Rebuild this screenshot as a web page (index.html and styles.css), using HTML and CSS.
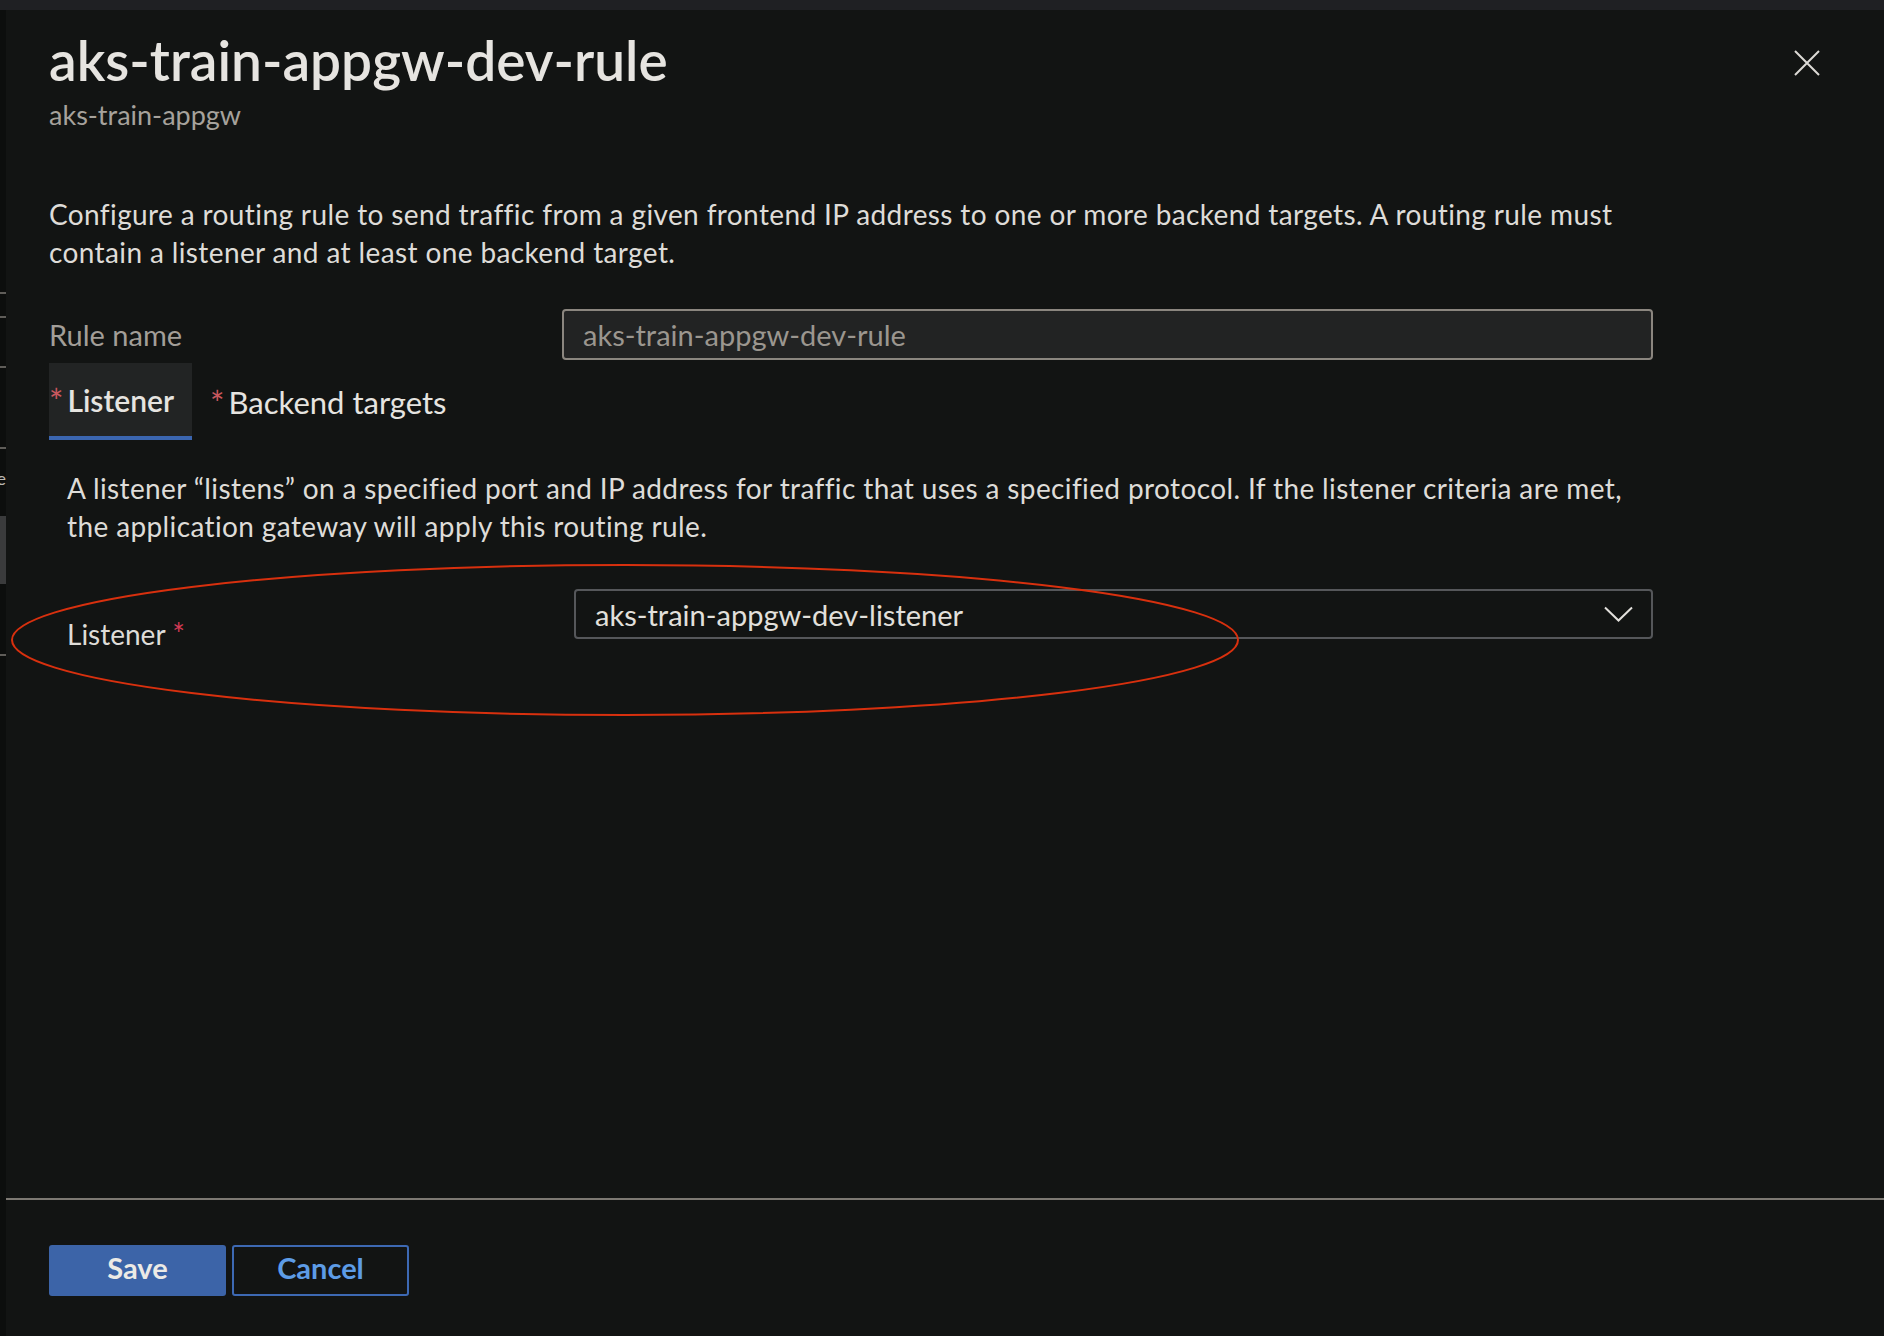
FILE: index.html
```html
<!DOCTYPE html>
<html lang="en">
<head>
<meta charset="utf-8">
<title>aks-train-appgw-dev-rule</title>
<link rel="stylesheet" href="styles.css">
</head>
<body>
<div class="topbar"></div>
<div class="main">
  <div class="edge">
    <div class="edge-mark m1"></div>
    <div class="edge-mark m2"></div>
    <div class="edge-mark m3"></div>
    <div class="edge-mark m4"></div>
    <div class="edge-glyph">e</div>
    <div class="edge-block"></div>
    <div class="edge-mark m7"></div>
  </div>
  <div class="blade">
    <div class="content">
      <div class="header">
        <div class="titles">
          <h1 class="title">aks-train-appgw-dev-rule</h1>
          <div class="subtitle">aks-train-appgw</div>
        </div>
        <button class="close" aria-label="Close">
          <svg width="26" height="26" viewBox="0 0 26 26"><path d="M1 1 L25 25 M25 1 L1 25" stroke="#dcdad6" stroke-width="2" fill="none"/></svg>
        </button>
      </div>
      <p class="desc">Configure a routing rule to send traffic from a given frontend IP address to one or more backend targets. A routing rule must contain a listener and at least one backend target.</p>
      <div class="row">
        <div class="label muted">Rule name</div>
        <div class="input">aks-train-appgw-dev-rule</div>
      </div>
      <div class="tabs">
        <div class="tab active"><span class="req">*</span>Listener</div>
        <div class="tab"><span class="req">*</span>Backend targets</div>
      </div>
      <div class="panel">
        <p class="panel-desc">A listener “listens” on a specified port and IP address for traffic that uses a specified protocol. If the listener criteria are met, the application gateway will apply this routing rule.</p>
        <div class="lrow">
          <div class="llabel">Listener <span class="req2">*</span></div>
          <div class="select">
            <span>aks-train-appgw-dev-listener</span>
            <svg width="29" height="16" viewBox="0 0 29 16"><path d="M1 1.5 L14.5 14.5 L28 1.5" stroke="#e2e0dc" stroke-width="2" fill="none"/></svg>
          </div>
        </div>
      </div>
    </div>
    <div class="footer">
      <button class="btn btn-primary">Save</button>
      <button class="btn btn-secondary">Cancel</button>
    </div>
  </div>
</div>
<svg class="annotation" width="1232" height="156" viewBox="0 0 1232 156"><ellipse cx="616" cy="78" rx="613" ry="75" fill="none" stroke="#d8300e" stroke-width="2"/></svg>
</body>
</html>
```
FILE: styles.css
```css
* { box-sizing: border-box; }
html, body { margin: 0; padding: 0; }
body {
  width: 1884px;
  height: 1336px;
  overflow: hidden;
  position: relative;
  background: #121413;
  font-family: "Segoe UI", Lato, "Liberation Sans", sans-serif;
  color: #dedcd8;
}
.topbar { height: 10px; background: #1f2023; }
.main { display: flex; height: 1326px; }
.edge {
  width: 6px;
  background: #0c0e0d;
  display: flex;
  flex-direction: column;
}
.edge-mark { height: 2px; background: #5f5d59; flex: none; }
.m1 { margin-top: 282px; }
.m2 { margin-top: 22px; }
.m3 { margin-top: 48px; }
.m4 { margin-top: 79px; }
.edge-glyph {
  margin-top: 21px;
  height: 16px;
  font-size: 18px;
  line-height: 16px;
  color: #b8b6b2;
  overflow: hidden;
  display: flex;
  justify-content: flex-end;
}
.edge-block { margin-top: 30px; height: 68px; background: #3a3b3c; }
.m7 { margin-top: 70px; }

.blade {
  flex: 1;
  display: flex;
  flex-direction: column;
  background: #121413;
}
.content { flex: 1; padding: 20px 0 0 43px; }
.header { display: flex; justify-content: space-between; align-items: flex-start; }
.title {
  margin: 0;
  font-size: 55px;
  line-height: 60px;
  font-weight: 600;
  color: #e6e4e0;
}
.subtitle {
  margin-top: 8px;
  font-size: 27px;
  line-height: 34px;
  color: #a6a29c;
}
.close {
  margin: 20px 64px 0 0;
  width: 26px;
  height: 26px;
  padding: 0;
  border: none;
  background: none;
  display: flex;
}
.desc, .panel-desc {
  font-size: 28px;
  line-height: 38px;
  letter-spacing: 0.38px;
}
.desc { width: 1604px; margin: 63px 0 0; }
.row {
  display: flex;
  align-items: center;
  width: 1604px;
  margin-top: 38px;
}
.label { width: 513px; font-size: 29px; line-height: 38px; }
.muted { color: #a29e98; }
.input {
  flex: 1;
  height: 51px;
  background: #222323;
  border: 2px solid #8b867f;
  border-radius: 4px;
  padding-left: 19px;
  display: flex;
  align-items: center;
  font-size: 29px;
  color: #9b968f;
}
.tabs { display: flex; margin-top: 3px; height: 77px; }
.tab {
  display: flex;
  align-items: center;
  padding: 0 18px;
  font-size: 31px;
  color: #e6e4e0;
}
.tab.active {
  padding-left: 0;
  font-size: 30px;
  background: #222424;
  border-bottom: 4px solid #3b66b0;
  font-weight: 600;
}
.req {
  color: #c9585f;
  font-weight: 400;
  font-size: 34px;
  line-height: 1;
  margin-right: 4px;
  position: relative;
  top: 1px;
}
.panel { padding-left: 18px; }
.panel-desc { width: 1586px; margin: 29px 0 0; }
.lrow {
  display: flex;
  align-items: flex-start;
  width: 1586px;
  margin-top: 44px;
}
.llabel {
  width: 507px;
  padding-top: 25px;
  font-size: 28px;
  line-height: 38px;
}
.req2 { color: #d43a55; font-size: 30px; }
.select {
  flex: 1;
  height: 50px;
  border: 2px solid #55575a;
  border-radius: 4px;
  display: flex;
  align-items: center;
  justify-content: space-between;
  padding: 0 18px 0 19px;
  font-size: 29px;
  color: #e2e0dc;
}
.footer {
  height: 138px;
  flex: none;
  border-top: 2px solid #7d7973;
  padding: 45px 0 0 43px;
  display: flex;
  align-items: flex-start;
  gap: 6px;
}
.btn {
  width: 177px;
  height: 51px;
  font-family: inherit;
  font-size: 29px;
  font-weight: 700;
  border-radius: 3px;
  padding: 0 0 6px;
}
.btn-primary { background: #3c64a8; color: #eceae6; border: none; }
.btn-secondary { background: transparent; border: 2px solid #3d69b3; color: #5d9ce6; }
.annotation { position: absolute; left: 9px; top: 562px; }
```
